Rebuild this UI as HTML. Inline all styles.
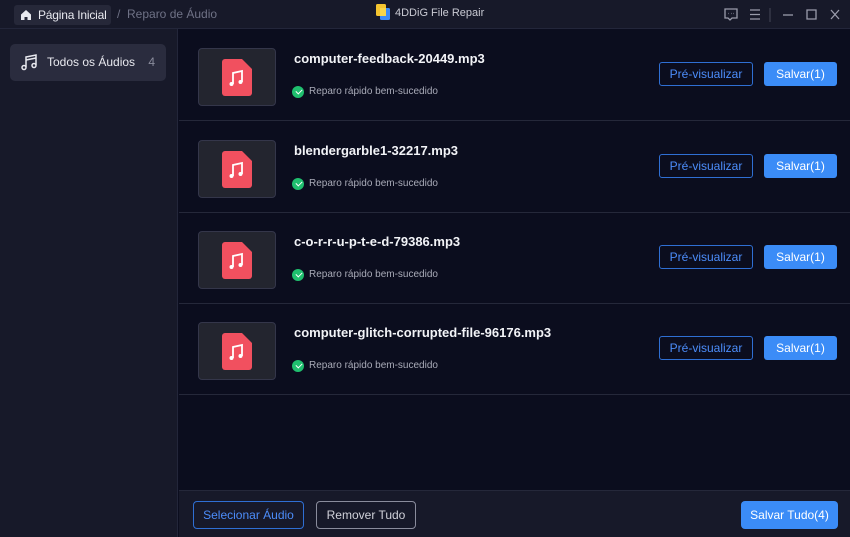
<!DOCTYPE html>
<html><head><meta charset="utf-8"><style>
*{box-sizing:border-box;margin:0;padding:0}
body{width:850px;height:537px;overflow:hidden;background:#0b0d1e;font-family:"Liberation Sans","DejaVu Sans",sans-serif;position:relative}
.top{position:absolute;left:0;top:0;width:850px;height:29px;background:#171929;border-bottom:1px solid #23263a}
.home{position:absolute;left:14px;top:5px;width:97px;height:20px;background:#262839;border-radius:3px;color:#e8e9ef;font-size:12px;line-height:20px;padding-left:24px;white-space:nowrap;letter-spacing:-0.2px}
.crumb{position:absolute;left:117px;top:7px;color:#6f7286;font-size:12px;white-space:nowrap}
.title{position:absolute;left:395px;top:7px;color:#c9cad3;font-size:11px}
.side{position:absolute;left:0;top:29px;width:178px;height:508px;background:#171929;border-right:1px solid #23263a}
.item{position:absolute;left:10px;top:15px;width:156px;height:37px;background:#2a2c3e;border-radius:5px;color:#e8e9ef;font-size:12px;line-height:37px;padding-left:37px}
.item .n{position:absolute;right:11px;color:#8a8c9c}
.row{position:absolute;left:179px;width:671px;height:92px;border-bottom:1px solid #25283a}
.thumb{position:absolute;left:19px;top:19px;width:78px;height:58px;background:#23252f;border:1px solid #34364a;border-radius:4px}
.thumb svg{position:absolute;left:23px;top:10px}
.name{position:absolute;left:115px;top:22px;color:#f2f3f7;font-size:13px;font-weight:bold}
.ok{position:absolute;left:113px;top:56px;color:#a9abb8;font-size:10px;line-height:14px;padding-left:17px}
.ok:before{content:"";position:absolute;left:0;top:1px;width:12px;height:12px;border-radius:50%;background:#1fbf6e}
.ok:after{content:"";position:absolute;left:3.5px;top:3.5px;width:5px;height:3px;border-left:1.6px solid #fff;border-bottom:1.6px solid #fff;transform:rotate(-45deg)}
.pv{position:absolute;left:480px;top:33px;width:94px;height:24px;border:1px solid #2f6fd3;border-radius:3px;color:#4c8dfa;font-size:12px;line-height:22px;text-align:center}
.sv{position:absolute;left:585px;top:33px;width:73px;height:24px;background:#3b8cf7;border-radius:3px;color:#fff;font-size:12px;line-height:24px;text-align:center}
.bot{position:absolute;left:179px;top:490px;width:671px;height:47px;background:#171929;border-top:1px solid #25283a}
.b1{position:absolute;left:14px;top:10px;width:111px;height:28px;border:1px solid #2f6fd3;border-radius:4px;color:#4c8dfa;font-size:12px;line-height:26px;text-align:center}
.b2{position:absolute;left:137px;top:10px;width:100px;height:28px;border:1px solid #8a8c9c;border-radius:4px;color:#d0d1d9;font-size:12px;line-height:26px;text-align:center}
.b3{position:absolute;left:562px;top:10px;width:97px;height:28px;background:#3b8cf7;border-radius:4px;color:#fff;font-size:12px;line-height:28px;text-align:center}
</style></head><body>
<div class="top">
<div class="home"><svg style="position:absolute;left:6px;top:4px" width="12" height="12" viewBox="0 0 12 12"><path d="M1 5.5L6 1l5 4.5V11H7.5V8h-3v3H1z" fill="#e8e9ef"/></svg>Página Inicial</div>
<div class="crumb">/&nbsp;&nbsp;Reparo de Áudio</div>
<svg style="position:absolute;left:376px;top:4px" width="14" height="16" viewBox="0 0 14 16"><rect x="0" y="0" width="10" height="12" rx="1.5" fill="#f4c430"/><rect x="4" y="4" width="10" height="12" rx="1.5" fill="#3b8cf7"/><rect x="4" y="4" width="6" height="8" fill="#f7d64a"/></svg>
<div class="title">4DDiG File Repair</div>
<svg style="position:absolute;left:724px;top:8px" width="120" height="14" viewBox="0 0 120 14" fill="none" stroke="#9a9cab" stroke-width="1.3"><path d="M1 1h12v9H8l-2 2-2-2H1z"/><path d="M4.5 5.5h.5M7 5.5h.5M9.5 5.5h.5"/><path d="M26 2h10M26 6.5h10M26 11h10"/><path d="M46 0v14" stroke="#3a3c4e"/><path d="M59 7h10"/><path d="M83 2h9v9h-9z"/><path d="M107 2l8 9M115 2l-8 9"/></svg>
</div>
<div class="side"><div class="item"><svg style="position:absolute;left:11px;top:10px" width="16" height="17" viewBox="0 0 16 17" fill="none" stroke="#e8e9ef" stroke-width="1.5"><path d="M5 13V3l10-2v10"/><path d="M5 6l10-2"/><circle cx="3" cy="13.5" r="2"/><circle cx="13" cy="11.5" r="2"/></svg>Todos os Áudios<span class="n">4</span></div></div>

<div class="row" style="top:29px"><div class="thumb"><svg width="30" height="37" viewBox="0 0 30 37"><path d="M3 0h17l10 10v24a3 3 0 0 1-3 3H3a3 3 0 0 1-3-3V3a3 3 0 0 1 3-3z" fill="#f1505f"/><path d="M11 25V14l9-2v11" stroke="#fff" stroke-width="1.8" fill="none"/><circle cx="9.5" cy="25" r="2" fill="#fff"/><circle cx="18.5" cy="23" r="2" fill="#fff"/></svg></div><div class="name">computer-feedback-20449.mp3</div><div class="ok">Reparo rápido bem-sucedido</div><div class="pv">Pré-visualizar</div><div class="sv">Salvar(1)</div></div>
<div class="row" style="top:121px"><div class="thumb"><svg width="30" height="37" viewBox="0 0 30 37"><path d="M3 0h17l10 10v24a3 3 0 0 1-3 3H3a3 3 0 0 1-3-3V3a3 3 0 0 1 3-3z" fill="#f1505f"/><path d="M11 25V14l9-2v11" stroke="#fff" stroke-width="1.8" fill="none"/><circle cx="9.5" cy="25" r="2" fill="#fff"/><circle cx="18.5" cy="23" r="2" fill="#fff"/></svg></div><div class="name">blendergarble1-32217.mp3</div><div class="ok">Reparo rápido bem-sucedido</div><div class="pv">Pré-visualizar</div><div class="sv">Salvar(1)</div></div>
<div class="row" style="top:212px"><div class="thumb"><svg width="30" height="37" viewBox="0 0 30 37"><path d="M3 0h17l10 10v24a3 3 0 0 1-3 3H3a3 3 0 0 1-3-3V3a3 3 0 0 1 3-3z" fill="#f1505f"/><path d="M11 25V14l9-2v11" stroke="#fff" stroke-width="1.8" fill="none"/><circle cx="9.5" cy="25" r="2" fill="#fff"/><circle cx="18.5" cy="23" r="2" fill="#fff"/></svg></div><div class="name">c-o-r-r-u-p-t-e-d-79386.mp3</div><div class="ok">Reparo rápido bem-sucedido</div><div class="pv">Pré-visualizar</div><div class="sv">Salvar(1)</div></div>
<div class="row" style="top:303px"><div class="thumb"><svg width="30" height="37" viewBox="0 0 30 37"><path d="M3 0h17l10 10v24a3 3 0 0 1-3 3H3a3 3 0 0 1-3-3V3a3 3 0 0 1 3-3z" fill="#f1505f"/><path d="M11 25V14l9-2v11" stroke="#fff" stroke-width="1.8" fill="none"/><circle cx="9.5" cy="25" r="2" fill="#fff"/><circle cx="18.5" cy="23" r="2" fill="#fff"/></svg></div><div class="name">computer-glitch-corrupted-file-96176.mp3</div><div class="ok">Reparo rápido bem-sucedido</div><div class="pv">Pré-visualizar</div><div class="sv">Salvar(1)</div></div>

<div class="bot"><div class="b1">Selecionar Áudio</div><div class="b2">Remover Tudo</div><div class="b3">Salvar Tudo(4)</div></div>
</body></html>
